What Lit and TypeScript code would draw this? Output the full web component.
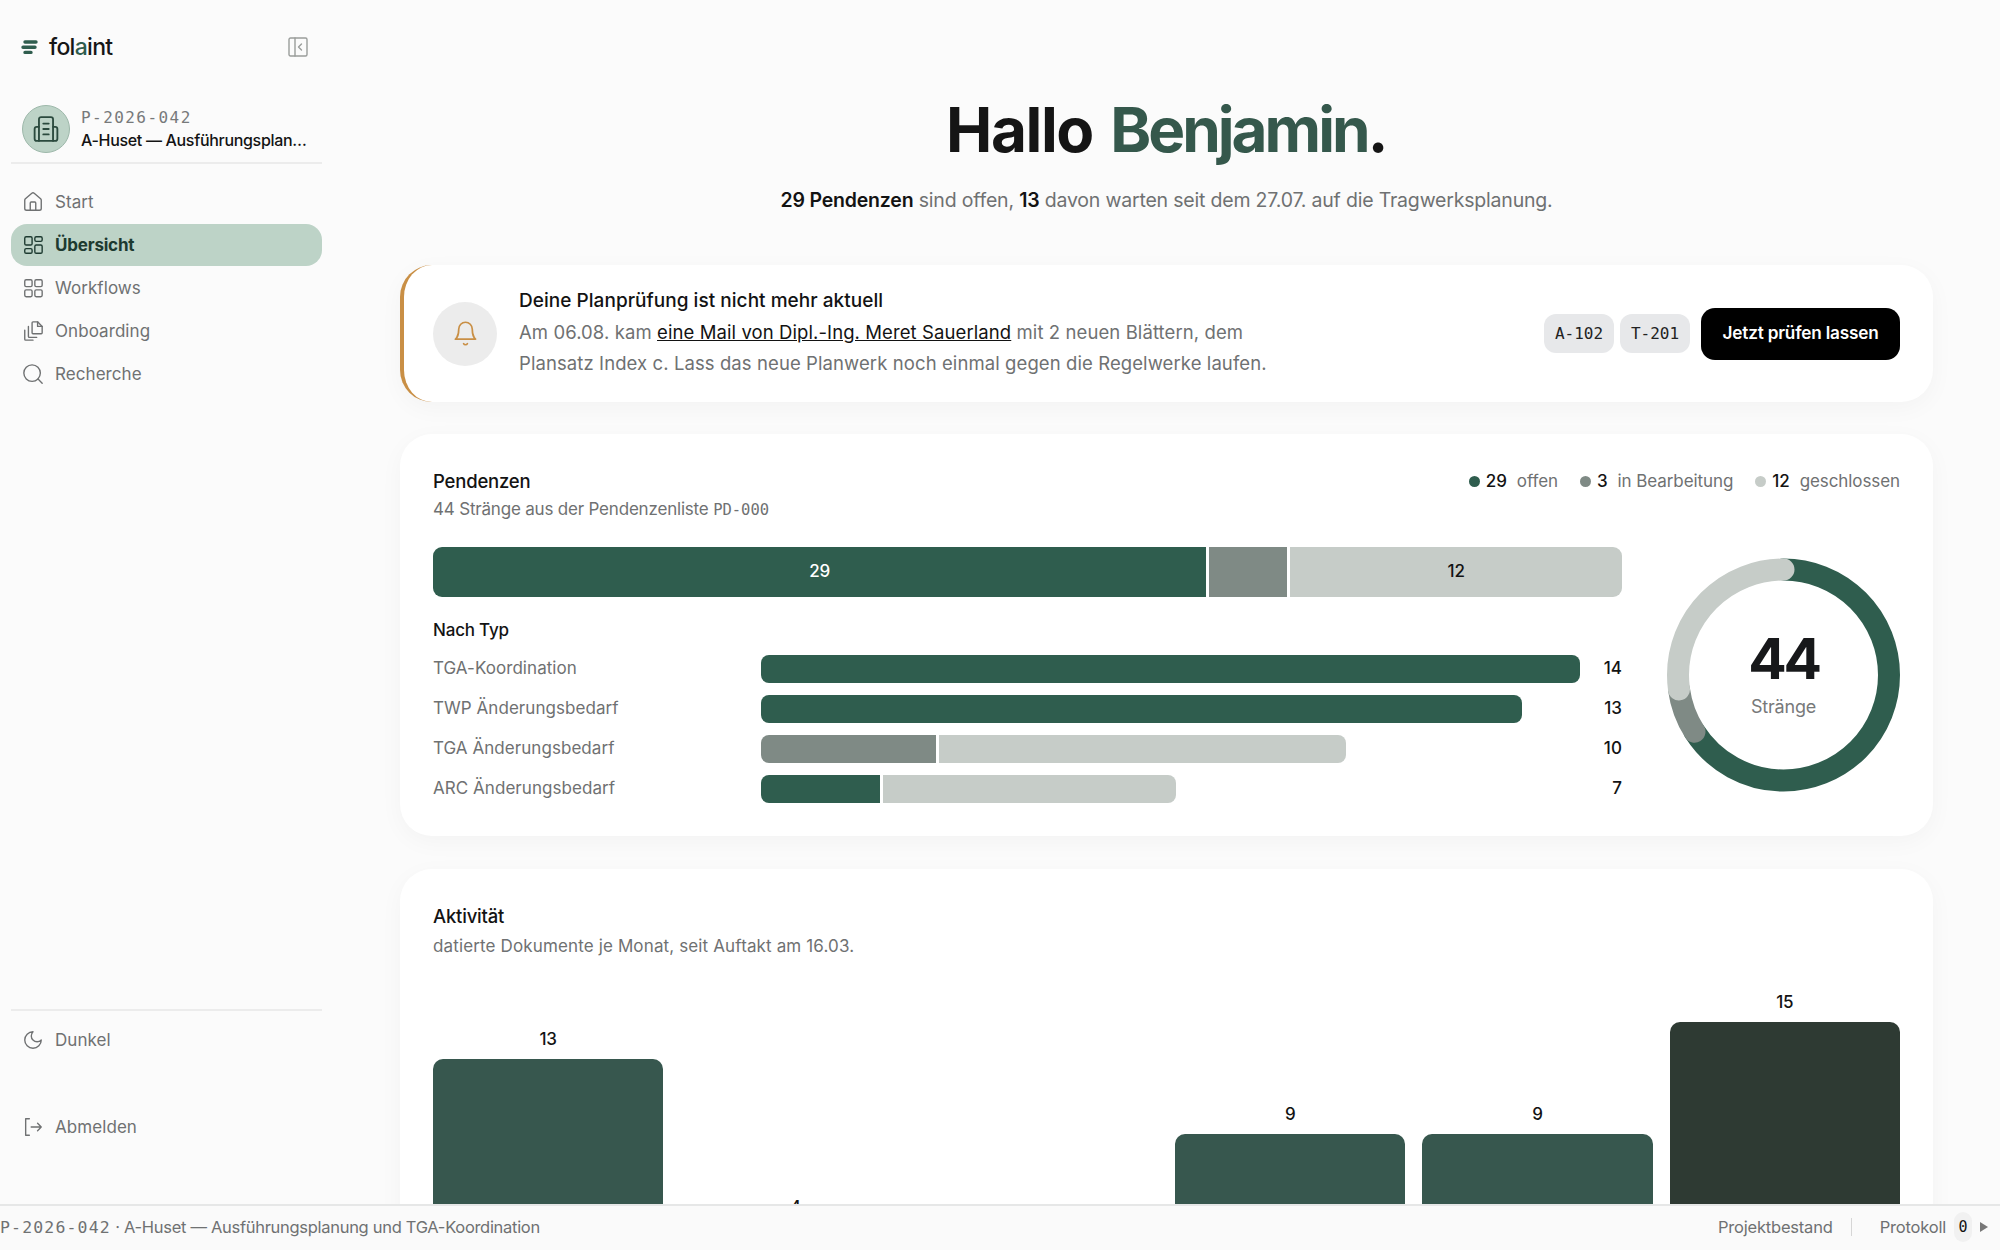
import { LitElement, html, css, svg } from 'lit';
import { customElement } from 'lit/decorators.js';

const GREEN = '#2f5d4e';
const MID = '#7f8a85';
const LIGHT = '#c6ccc8';

const NAV = [
  { label: 'Start', icon: svg`<path d="M15 21v-8a1 1 0 0 0-1-1h-4a1 1 0 0 0-1 1v8"/><path d="M3 10a2 2 0 0 1 .709-1.528l7-5.999a2 2 0 0 1 2.582 0l7 5.999A2 2 0 0 1 21 10v9a2 2 0 0 1-2 2H5a2 2 0 0 1-2-2z"/>` },
  { label: 'Übersicht', active: true, icon: svg`<rect x="3" y="3" width="8" height="9" rx="1.5"/><rect x="14" y="3" width="8" height="5" rx="1.5"/><rect x="14" y="12" width="8" height="9" rx="1.5"/><rect x="3" y="16" width="8" height="5" rx="1.5"/>` },
  { label: 'Workflows', icon: svg`<rect x="3" y="3" width="8" height="7.5" rx="1.5"/><rect x="14" y="3" width="8" height="7.5" rx="1.5"/><rect x="14" y="14" width="8" height="7.5" rx="1.5"/><rect x="3" y="14" width="8" height="7.5" rx="1.5"/>` },
  { label: 'Onboarding', icon: svg`<path d="M22 7v7a1 1 0 0 1-1 1h-9a1 1 0 0 1-1-1V3a1 1 0 0 1 1-1h5z"/><path d="M17 2v5h5"/><path d="M7 7v11a1 1 0 0 0 1 1h8"/><path d="M3 11v10a1 1 0 0 0 1 1h8"/>` },
  { label: 'Recherche', icon: svg`<circle cx="11" cy="11" r="9"/><path d="m22 22-4.5-4.5"/>` },
];

const LEGEND = [
  { color: GREEN, n: 29, label: 'offen' },
  { color: MID, n: 3, label: 'in Bearbeitung' },
  { color: LIGHT, n: 12, label: 'geschlossen' },
];

const STACK = [
  { color: GREEN, w: 774, label: '29' },
  { color: MID, w: 78, label: '' },
  { color: LIGHT, w: 332, label: '12' },
];

// width = share of the track, segs in px proportions
const TYPES = [
  { label: 'TGA-Koordination', n: 14, width: 100, segs: [{ c: GREEN, f: 1 }] },
  { label: 'TWP Änderungsbedarf', n: 13, width: 92.9, segs: [{ c: GREEN, f: 1 }] },
  { label: 'TGA Änderungsbedarf', n: 10, width: 71.4, segs: [{ c: MID, f: 175 }, { c: LIGHT, f: 408 }] },
  { label: 'ARC Änderungsbedarf', n: 7, width: 50.7, segs: [{ c: GREEN, f: 119 }, { c: LIGHT, f: 294 }] },
];

const ACTIVITY = [
  { n: 13, color: '#37574e' },
  { n: 4, color: '#37574e' },
  { n: 2, color: '#37574e' },
  { n: 9, color: '#37574e' },
  { n: 9, color: '#37574e' },
  { n: 15, color: '#2e3a33' },
];

@customElement('app-root')
export class AppRoot extends LitElement {
  static styles = css`
    :host {
      display: block;
      height: 1250px;
      overflow: hidden;
      background: #fbfbfb;
      color: #131313;
      font-family: Inter, 'Noto Sans', sans-serif;
      letter-spacing: -0.012em;
    }
    .mono { font-family: 'DejaVu Sans Mono', monospace; letter-spacing: 0; }

    .shell { display: flex; height: 1204px; overflow: hidden; }

    /* sidebar */
    .side {
      width: 372px;
      flex: none;
      box-sizing: border-box;
      padding: 0 50px 0 11px;
      display: flex;
      flex-direction: column;
    }
    .brand {
      height: 94px;
      display: flex;
      align-items: center;
      padding: 0 14px 0 10px;
      color: #2f5d4e;
    }
    .brand b {
      margin-left: 11px;
      font-size: 23px;
      font-weight: 500;
      color: #161616;
      letter-spacing: -0.03em;
      flex: 1;
    }
    .brand b i { font-style: normal; color: #2f5d4e; }
    .brand .toggle { color: #9a9d9b; }
    .project {
      height: 70px;
      box-sizing: border-box;
      display: flex;
      align-items: center;
      gap: 11px;
      padding: 2px 12px 0 11px;
      border-bottom: 2px solid #ececec;
    }
    .avatar {
      width: 48px;
      height: 48px;
      flex: none;
      box-sizing: border-box;
      border-radius: 50%;
      background: #bdd3c7;
      border: 1px solid #9db8aa;
      display: flex;
      align-items: center;
      justify-content: center;
      color: #2b4a3e;
    }
    .project-text { min-width: 0; flex: 1; }
    .project-id.mono { font-size: 16px; line-height: 22px; color: #77797a; letter-spacing: 0.09em; }
    .project-name {
      font-size: 16px;
      line-height: 22px;
      font-weight: 500;
      letter-spacing: -0.02em;
      white-space: nowrap;
      overflow: hidden;
      text-overflow: ellipsis;
    }
    nav { margin-top: 17px; display: flex; flex-direction: column; gap: 1px; }
    .nav-item {
      height: 42px;
      display: flex;
      align-items: center;
      gap: 11px;
      padding-left: 11px;
      border-radius: 16px;
      font-size: 17px;
      letter-spacing: 0.004em;
      color: #6f7172;
    }
    .nav-item.active { background: #bdd3c7; color: #1d3a30; font-weight: 700; letter-spacing: -0.012em; }
    .nav-item svg { flex: none; }
    .side-foot {
      margin-top: auto;
      border-top: 2px solid #ececec;
      height: 195px;
      box-sizing: border-box;
      padding-top: 8px;
      display: flex;
      flex-direction: column;
      gap: 45px;
    }

    /* main */
    main {
      flex: 1;
      min-width: 0;
      box-sizing: border-box;
      padding: 0 67px 0 28px;
    }
    .hero { height: 265px; text-align: center; box-sizing: border-box; padding-top: 87px; }
    h1 {
      margin: 0;
      font-size: 62px;
      line-height: 86px;
      font-weight: 700;
      letter-spacing: -0.023em;
      word-spacing: 4px;
      color: #151515;
    }
    h1 span { color: #35584c; letter-spacing: -0.048em; }
    .hero p { margin: 13px 0 0; font-size: 19.5px; line-height: 28px; color: #6f7172; }
    .hero p b { color: #131313; font-weight: 600; }

    .card {
      background: #fff;
      border-radius: 32px;
      box-shadow: 0 6px 24px rgba(0, 0, 0, 0.035);
      padding: 33px;
      margin-bottom: 32px;
      box-sizing: border-box;
    }

    .alert {
      height: 137px;
      padding: 0 33px 0 29px;
      border-left: 4px solid #c98f45;
      display: flex;
      align-items: center;
    }
    .bell {
      width: 64px;
      height: 64px;
      flex: none;
      border-radius: 50%;
      background: #ececec;
      color: #c98f45;
      display: flex;
      align-items: center;
      justify-content: center;
      margin-right: 22px;
    }
    .alert-text { flex: 1; padding-bottom: 2px; }
    .alert-title { font-size: 19px; line-height: 30px; font-weight: 500; letter-spacing: 0.002em; margin-bottom: 1px; }
    .alert-body { font-size: 18.5px; line-height: 31px; color: #6f7172; max-width: 770px; letter-spacing: 0.005em; }
    .alert-body a { color: #131313; text-decoration: underline; }
    .chip {
      height: 39px;
      width: 70px;
      margin-right: 6px;
      border-radius: 12px;
      background: #e7e8ea;
      display: flex;
      align-items: center;
      justify-content: center;
      font-size: 16px;
      color: #222;
    }
    .cta {
      height: 52px;
      width: 199px;
      margin-left: 5px;
      border-radius: 14px;
      background: #000;
      color: #fff;
      display: flex;
      align-items: center;
      justify-content: center;
      font-size: 17.2px;
      font-weight: 600;
      padding-bottom: 2px;
      box-sizing: border-box;
    }

    .head { display: flex; justify-content: space-between; align-items: flex-start; }
    .title { font-size: 18.5px; line-height: 28px; font-weight: 500; }
    .sub { font-size: 17px; line-height: 28px; color: #6f7172; }
    .sub .mono { font-size: 15.5px; }
    .legend { display: flex; gap: 22px; font-size: 17px; line-height: 28px; color: #6f7172; letter-spacing: -0.005em; }
    .legend > div { display: flex; align-items: center; }
    .legend i { width: 11px; height: 11px; border-radius: 50%; margin-right: 6px; }
    .legend b { color: #131313; font-weight: 500; margin-right: 10px; }

    .pend { display: flex; gap: 45px; align-items: center; margin-top: 23px; }
    .pend-left { flex: 1; min-width: 0; }
    .stack { display: flex; gap: 3px; height: 50px; border-radius: 9px; overflow: hidden; }
    .stack div {
      display: flex;
      align-items: center;
      justify-content: center;
      font-size: 17px;
      font-weight: 500;
      color: #fff;
      padding-bottom: 2px;
      box-sizing: border-box;
    }
    .stack div.light { color: #131313; }
    .by-type { margin-top: 21px; font-size: 17px; line-height: 24px; font-weight: 500; }
    .rows { margin-top: 13px; display: flex; flex-direction: column; gap: 12px; }
    .row {
      display: grid;
      grid-template-columns: 328px 1fr 42px;
      align-items: center;
      height: 28px;
      font-size: 17px;
      letter-spacing: 0.003em;
      color: #6f7172;
    }
    .row span, .row b { padding-bottom: 3px; }
    .track { display: flex; gap: 3px; height: 28px; border-radius: 8px; overflow: hidden; }
    .row b { text-align: right; color: #131313; font-weight: 500; font-size: 17px; }

    .donut { position: relative; width: 233px; height: 234px; flex: none; }
    .donut svg { display: block; }
    .donut-text {
      position: absolute;
      inset: 0;
      display: flex;
      flex-direction: column;
      align-items: center;
      padding-top: 67px;
      box-sizing: border-box;
    }
    .donut-text b { font-size: 57px; line-height: 68px; font-weight: 700; color: #17181a; letter-spacing: -0.06em; }
    .donut-text span { font-size: 18px; line-height: 28px; color: #77797a; }

    .activity { height: 600px; margin-top: 33px; }
    .activity .sub { margin-top: 2px; letter-spacing: 0.008em; }
    .bars {
      display: grid;
      grid-template-columns: repeat(6, 1fr);
      gap: 17px;
      height: 312px;
      margin-top: 29px;
      align-items: end;
    }
    .col { display: flex; flex-direction: column; align-items: center; }
    .col span { font-size: 17px; line-height: 26px; font-weight: 500; margin-bottom: 7px; }
    .col div { width: 100%; border-radius: 10px 10px 0 0; }

    /* status bar */
    .status {
      height: 46px;
      box-sizing: border-box;
      border-top: 2px solid #e6e7e7;
      background: #fafafa;
      display: flex;
      align-items: center;
      font-size: 16.5px;
      color: #6f7172;
      padding-bottom: 2px;
    }
    .status .left { flex: 1; letter-spacing: -0.018em; }
    .status .left .mono { letter-spacing: 0.07em; }
    .status .sep { width: 1px; height: 18px; background: #d6d6d6; margin: 0 28px 0 18px; }
    .status .count {
      width: 18px;
      height: 30px;
      margin: 0 8px 0 8px;
      border-radius: 9px;
      background: #f1f1f1;
      color: #131313;
      display: flex;
      align-items: center;
      justify-content: center;
      font-size: 15px;
    }
    .status .arrow {
      width: 0;
      height: 0;
      border-left: 8px solid #777;
      border-top: 5px solid transparent;
      border-bottom: 5px solid transparent;
      margin-right: 12px;
    }
  `;

  private icon(body: unknown, size = 22, stroke = 1.5) {
    return html`<svg width=${size} height=${size} viewBox="0 0 24 24" fill="none" stroke="currentColor" stroke-width=${stroke} stroke-linecap="round" stroke-linejoin="round">${body}</svg>`;
  }

  private renderDonut() {
    const r = 105.5;
    const c = 2 * Math.PI * r;
    const arcs = [
      { color: GREEN, from: 0, n: 29 },
      { color: MID, from: 29, n: 3 },
      { color: LIGHT, from: 32, n: 12 },
    ];
    return html`<svg width="233" height="234" viewBox="0 0 233 234">
      <g transform="rotate(-90 116.5 117)">
        ${arcs.map((a) => svg`<circle cx="116.5" cy="117" r=${r} fill="none" stroke=${a.color} stroke-width="22" stroke-linecap="round"
          stroke-dasharray="${(a.n / 44) * c} ${c}" stroke-dashoffset=${-(a.from / 44) * c}></circle>`)}
      </g>
    </svg>`;
  }

  render() {
    return html`
      <div class="shell">
        <aside class="side">
          <div class="brand">
            <svg width="17" height="17" viewBox="0 0 17 17" fill="none" stroke="currentColor" stroke-width="3.4" stroke-linecap="round">
              <path d="M4 3h11M2 8.2h12M4 13.4h6"/>
            </svg>
            <b>fol<i>a</i>int</b>
            <svg class="toggle" width="20" height="20" viewBox="0 0 20 20" fill="none" stroke="currentColor" stroke-width="1.4" stroke-linecap="round" stroke-linejoin="round">
              <rect x="1" y="1" width="18" height="18" rx="1.5"/><path d="M7 1v18M13.5 7l-3 3 3 3"/>
            </svg>
          </div>
          <div class="project">
            <div class="avatar">
              ${this.icon(svg`<path d="M5.500 23V3a2 2 0 0 1 2-2h9a2 2 0 0 1 2 2v20"/><path d="M5.500 10H3.500a2 2 0 0 0-2 2v9a2 2 0 0 0 2 2h17a2 2 0 0 0 2-2v-9a2 2 0 0 0-2-2h-2"/><path d="M9.500 7h5M9.500 12h5M9.500 17h5"/>`, 26, 1.7)}
            </div>
            <div class="project-text">
              <div class="project-id mono">P-2026-042</div>
              <div class="project-name">A-Huset — Ausführungsplanung und TGA-Koordination</div>
            </div>
          </div>
          <nav>
            ${NAV.map((n) => html`<div class="nav-item ${n.active ? 'active' : ''}">${this.icon(n.icon)}<span>${n.label}</span></div>`)}
          </nav>
          <div class="side-foot">
            <div class="nav-item">
              ${this.icon(svg`<path d="M12 3a6 6 0 0 0 9 9 9 9 0 1 1-9-9Z"/>`)}<span>Dunkel</span>
            </div>
            <div class="nav-item">
              ${this.icon(svg`<path d="M8 3H4v18h4"/><path d="M10 12h11M17 8l4 4-4 4"/>`)}<span>Abmelden</span>
            </div>
          </div>
        </aside>

        <main>
          <section class="hero">
            <h1>Hallo <span>Benjamin</span>.</h1>
            <p><b>29 Pendenzen</b> sind offen, <b>13</b> davon warten seit dem 27.07. auf die Tragwerksplanung.</p>
          </section>

          <section class="card alert">
            <div class="bell">
              ${this.icon(svg`<path d="M6 8a6 6 0 0 1 12 0c0 7 3 9 3 9H3s3-2 3-9"/><path d="M10.300 21a1.940 1.940 0 0 0 3.400 0"/>`, 27)}
            </div>
            <div class="alert-text">
              <div class="alert-title">Deine Planprüfung ist nicht mehr aktuell</div>
              <div class="alert-body">Am 06.08. kam <a>eine Mail von Dipl.-Ing. Meret Sauerland</a> mit 2 neuen Blättern, dem Plansatz Index c. Lass das neue Planwerk noch einmal gegen die Regelwerke laufen.</div>
            </div>
            <div class="chip mono">A-102</div>
            <div class="chip mono">T-201</div>
            <div class="cta">Jetzt prüfen lassen</div>
          </section>

          <section class="card">
            <div class="head">
              <div>
                <div class="title">Pendenzen</div>
                <div class="sub">44 Stränge aus der Pendenzenliste <span class="mono">PD-000</span></div>
              </div>
              <div class="legend">
                ${LEGEND.map((l) => html`<div><i style="background:${l.color}"></i><b>${l.n}</b>${l.label}</div>`)}
              </div>
            </div>
            <div class="pend">
              <div class="pend-left">
                <div class="stack">
                  ${STACK.map((s) => html`<div class=${s.color === LIGHT ? 'light' : ''} style="flex:${s.w};background:${s.color}">${s.label}</div>`)}
                </div>
                <div class="by-type">Nach Typ</div>
                <div class="rows">
                  ${TYPES.map((t) => html`<div class="row">
                    <span>${t.label}</span>
                    <div class="track" style="width:${t.width}%">
                      ${t.segs.map((s) => html`<div style="flex:${s.f};background:${s.c}"></div>`)}
                    </div>
                    <b>${t.n}</b>
                  </div>`)}
                </div>
              </div>
              <div class="donut">
                ${this.renderDonut()}
                <div class="donut-text"><b>44</b><span>Stränge</span></div>
              </div>
            </div>
          </section>

          <section class="card activity">
            <div class="title">Aktivität</div>
            <div class="sub">datierte Dokumente je Monat, seit Auftakt am 16.03.</div>
            <div class="bars">
              ${ACTIVITY.map((a) => html`<div class="col"><span>${a.n}</span><div style="height:${a.n * 18.67}px;background:${a.color}"></div></div>`)}
            </div>
          </section>
        </main>
      </div>

      <footer class="status">
        <div class="left"><span class="mono">P-2026-042</span> · A-Huset — Ausführungsplanung und TGA-Koordination</div>
        <span>Projektbestand</span>
        <span class="sep"></span>
        <span>Protokoll</span>
        <span class="count mono">0</span>
        <span class="arrow"></span>
      </footer>
    `;
  }
}
